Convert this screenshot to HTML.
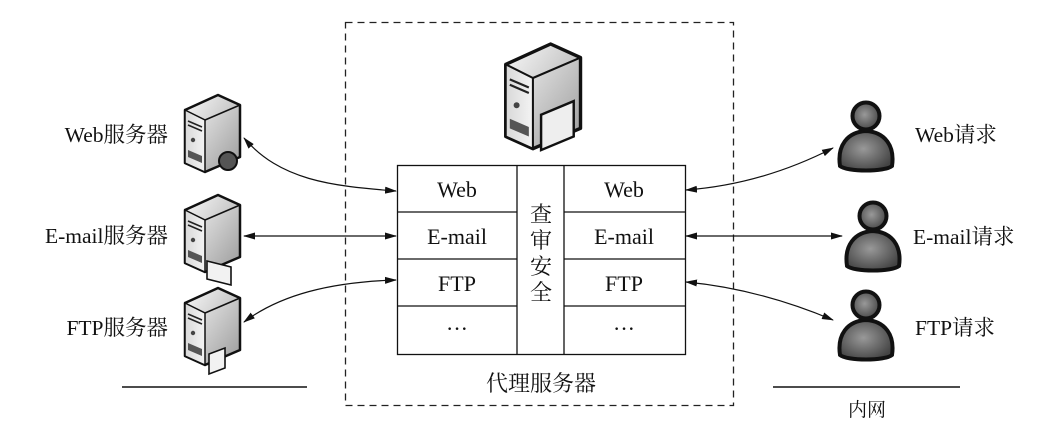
<!DOCTYPE html>
<html><head><meta charset="utf-8"><style>
html,body{margin:0;padding:0;background:#fff}
svg{display:block}
text{font-family:"Liberation Serif","Noto Serif CJK SC",serif;fill:#111}
</style></head><body>
<svg width="1051" height="434" viewBox="0 0 1051 434" xmlns="http://www.w3.org/2000/svg">
<defs>
<linearGradient id="sg" x1="0" y1="0" x2="1" y2="1">
<stop offset="0" stop-color="#fafafa"/><stop offset="1" stop-color="#9a9a9a"/></linearGradient>
<linearGradient id="fg" x1="0" y1="0" x2="1" y2="0">
<stop offset="0" stop-color="#d8d8d8"/><stop offset="1" stop-color="#f4f4f4"/></linearGradient>
<radialGradient id="pg" cx="0.45" cy="0.45" r="0.6">
<stop offset="0" stop-color="#999"/><stop offset="1" stop-color="#444"/></radialGradient>
<marker id="ar" markerWidth="12" markerHeight="8" refX="11" refY="4" orient="auto-start-reverse" markerUnits="userSpaceOnUse">
<path d="M0,0.5 L12,4 L0,7.5 Z" fill="#111"/></marker>
<g id="srv">
<path d="M2,15 L35,0 L57,10 L57,62 L22,77 L2,68 Z" fill="url(#sg)" stroke="#111" stroke-width="2.5" stroke-linejoin="round"/>
<path d="M2,15 L22,25 L22,77 L2,68 Z" fill="url(#fg)" stroke="#111" stroke-width="1.5"/>
<path d="M22,25 L57,10" stroke="#111" stroke-width="1.5"/>
<path d="M5,26 L19,32 M5,30 L19,36" stroke="#222" stroke-width="1.6"/>
<circle cx="10" cy="45" r="2.2" fill="#444"/>
<path d="M5,55 L19,61 L19,68 L5,62 Z" fill="#555"/>
</g>
<g id="per">
<path d="M-26,50 C-29,30 -19,16 0,15 C19,16 29,30 26,50 C19,56 -19,56 -26,50 Z" fill="url(#pg)" stroke="#111" stroke-width="4"/>
<circle cx="0" cy="0" r="13.5" fill="url(#pg)" stroke="#111" stroke-width="4"/>
</g>
</defs>

<rect x="345.5" y="22.5" width="388" height="383" fill="none" stroke="#222" stroke-width="1.3" stroke-dasharray="7,5"/>

<g transform="translate(503,44) scale(1.36)">
<use href="#srv"/>
<path d="M28,52 L52,42 L52,68 L28,78 Z" fill="#eee" stroke="#111" stroke-width="1.8"/>
</g>

<g transform="translate(183,95)"><use href="#srv"/>
<circle cx="45" cy="66" r="9" fill="#555" stroke="#111" stroke-width="2"/></g>
<g transform="translate(183,195)"><use href="#srv"/>
<path d="M24,66 L48,72 L48,90 L24,84 Z" fill="#f2f2f2" stroke="#111" stroke-width="1.6"/></g>
<g transform="translate(183,288)"><use href="#srv"/>
<path d="M26,66 L42,60 L42,80 L26,86 Z" fill="#f2f2f2" stroke="#111" stroke-width="1.6"/></g>

<g transform="translate(866,116)"><use href="#per"/></g>
<g transform="translate(873,216)"><use href="#per"/></g>
<g transform="translate(866,305)"><use href="#per"/></g>

<g fill="none" stroke="#111" stroke-width="1.3">
<rect x="397.5" y="165.5" width="288" height="189"/>
<line x1="517" y1="165" x2="517" y2="354"/>
<line x1="564" y1="165" x2="564" y2="354"/>
<line x1="397" y1="212" x2="517" y2="212"/><line x1="564" y1="212" x2="685" y2="212"/>
<line x1="397" y1="259" x2="517" y2="259"/><line x1="564" y1="259" x2="685" y2="259"/>
<line x1="397" y1="306" x2="517" y2="306"/><line x1="564" y1="306" x2="685" y2="306"/>
</g>
<g font-size="22" text-anchor="middle">
<text x="457" y="197">Web</text><text x="624" y="197">Web</text>
<text x="457" y="244">E-mail</text><text x="624" y="244">E-mail</text>
<text x="457" y="291">FTP</text><text x="624" y="291">FTP</text>
<text x="457" y="336">···</text><text x="624" y="336">···</text>
<text x="541" y="222">查</text><text x="541" y="248">审</text>
<text x="541" y="274">安</text><text x="541" y="300">全</text>
<text x="541" y="391">代理服务器</text>
</g>

<g fill="none" stroke="#111" stroke-width="1.2" marker-start="url(#ar)" marker-end="url(#ar)">
<path d="M244,138 C280,180 330,186 396,191"/>
<path d="M244,236 L396,236"/>
<path d="M244,322 C280,295 330,282 396,280"/>
<path d="M686,190 C740,186 790,170 833,148"/>
<path d="M686,236 L842,236"/>
<path d="M686,282 C740,287 790,302 833,320"/>
</g>

<g font-size="21.5">
<text x="168" y="142" text-anchor="end">Web服务器</text>
<text x="168" y="243" text-anchor="end">E-mail服务器</text>
<text x="168" y="335" text-anchor="end">FTP服务器</text>
<text x="915" y="142">Web请求</text>
<text x="913" y="244">E-mail请求</text>
<text x="915" y="335">FTP请求</text>
<text x="867" y="416" text-anchor="middle" font-size="19">内网</text>
</g>
<line x1="122" y1="387" x2="307" y2="387" stroke="#111" stroke-width="1.6"/>
<line x1="773" y1="387" x2="960" y2="387" stroke="#111" stroke-width="1.6"/>
</svg>
</body></html>
